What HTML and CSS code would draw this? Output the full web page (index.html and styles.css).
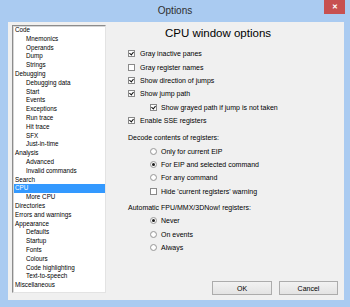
FILE: index.html
```html
<!DOCTYPE html>
<html lang="en">
<head>
    <meta charset="UTF-8">
    <title>Options</title>
    <link rel="stylesheet" href="styles.css">
</head>
<body>
<div class="window">
    <div class="titlebar">
        <span class="title">Options</span>
        <button type="button" class="close">&#x2715;</button>
    </div>

    <div class="client">
        <ul class="tree">
            <li>Code</li>
            <li class="child">Mnemonics</li>
            <li class="child">Operands</li>
            <li class="child">Dump</li>
            <li class="child">Strings</li>
            <li>Debugging</li>
            <li class="child">Debugging data</li>
            <li class="child">Start</li>
            <li class="child">Events</li>
            <li class="child">Exceptions</li>
            <li class="child">Run trace</li>
            <li class="child">Hit trace</li>
            <li class="child">SFX</li>
            <li class="child">Just-in-time</li>
            <li>Analysis</li>
            <li class="child">Advanced</li>
            <li class="child">Invalid commands</li>
            <li>Search</li>
            <li class="sel">CPU</li>
            <li class="child">More CPU</li>
            <li>Directories</li>
            <li>Errors and warnings</li>
            <li>Appearance</li>
            <li class="child">Defaults</li>
            <li class="child">Startup</li>
            <li class="child">Fonts</li>
            <li class="child">Colours</li>
            <li class="child">Code highlighting</li>
            <li class="child">Text-to-speech</li>
            <li>Miscellaneous</li>
        </ul>

        <div class="panel">
            <h1>CPU window options</h1>

            <div class="opts">
                <div class="row"><span class="cb on"></span><span>Gray inactive panes</span></div>
                <div class="row"><span class="cb"></span><span>Gray register names</span></div>
                <div class="row"><span class="cb on"></span><span>Show direction of jumps</span></div>
                <div class="row"><span class="cb on"></span><span>Show jump path</span></div>
                <div class="row sub"><span class="cb on"></span><span>Show grayed path if jump is not taken</span></div>
                <div class="row"><span class="cb on"></span><span>Enable SSE registers</span></div>

                <div class="group">Decode contents of registers:</div>
                <div class="row sub"><span class="rb"></span><span>Only for current EIP</span></div>
                <div class="row sub"><span class="rb on"></span><span>For EIP and selected command</span></div>
                <div class="row sub"><span class="rb"></span><span>For any command</span></div>
                <div class="row sub"><span class="cb"></span><span>Hide 'current registers' warning</span></div>

                <div class="group second">Automatic FPU/MMX/3DNow! registers:</div>
                <div class="row sub"><span class="rb on"></span><span>Never</span></div>
                <div class="row sub"><span class="rb"></span><span>On events</span></div>
                <div class="row sub"><span class="rb"></span><span>Always</span></div>
            </div>

            <div class="actions">
                <button type="button" class="btn ok">OK</button>
                <button type="button" class="btn">Cancel</button>
            </div>
        </div>
    </div>
</div>
</body>
</html>
```

FILE: styles.css
```css
body {
    margin: 0;
    background-color: #aacbf1;
    font-family: "Liberation Sans", Arial, sans-serif;
    color: #000;
}

.window {
    width: 350px;
    height: 307px;
    display: flex;
    flex-direction: column;
}

.titlebar {
    height: 22px;
    display: grid;
    grid-template-columns: 1fr auto 1fr;
    align-items: start;
}

.title {
    grid-column: 2;
    font-size: 10px;
    line-height: 22px;
    color: #2e2e2e;
}

.close {
    grid-column: 3;
    justify-self: end;
    width: 21px;
    height: 14px;
    margin-right: 5px;
    padding: 0;
    border: none;
    background-color: #c75050;
    color: #fff;
    font-size: 7px;
    font-weight: bold;
    line-height: 14px;
}

.client {
    flex: 1;
    margin: 0 6px 7px 8px;
    padding: 3px 6px 5px 4px;
    background-color: #f0f0f0;
    display: flex;
}

/* tree list on the left */
.tree {
    width: 94px;
    height: 268px;
    box-sizing: border-box;
    margin: 0;
    padding: 0;
    list-style: none;
    background-color: #fff;
    border: 1px solid;
    border-color: #8c8c8c #e3e3e3 #e3e3e3 #8c8c8c;
    box-shadow: inset 1px 1px 0 #d6d6d6;
    font-size: 6.3px;
    line-height: 8.8px;
    white-space: nowrap;
    color: #000;
}

.tree li {
    padding-left: 2px;
}

.tree li.child {
    padding-left: 13px;
}

.tree li.sel {
    margin-left: 1px;
    padding-left: 1px;
    background-color: #3399ff;
    color: #fff;
}

/* options panel */
.panel {
    flex: 1;
    display: flex;
    flex-direction: column;
    font-size: 7px;
    color: #000;
}

.panel h1 {
    margin: 1px 0 0 0;
    padding-right: 8px;
    font-size: 11.5px;
    font-weight: normal;
    line-height: 14px;
    text-align: center;
    color: #000;
}

.opts {
    margin-top: 7px;
    display: flex;
    flex-direction: column;
}

.row {
    height: 13.4px;
    display: flex;
    align-items: center;
    gap: 5px;
    padding-left: 22px;
    color: #000;
}

.row.sub {
    padding-left: 44px;
    gap: 4px;
}

.group {
    height: 13.4px;
    line-height: 13.4px;
    margin-top: 3.6px;
    padding-left: 22px;
}

.group.second {
    margin-top: 3px;
}

.cb {
    width: 7px;
    height: 7px;
    box-sizing: border-box;
    border: 1px solid #8a8a8a;
    background-color: #fff;
    flex: none;
    position: relative;
}

.cb.on::after {
    content: "";
    position: absolute;
    left: 1px;
    top: 0;
    width: 2px;
    height: 3px;
    border: solid #111;
    border-width: 0 1px 1px 0;
    transform: rotate(40deg);
}

.rb {
    width: 7px;
    height: 7px;
    box-sizing: border-box;
    border: 1px solid #9a9a9a;
    border-radius: 50%;
    background: radial-gradient(circle, #fff 40%, #e6e6e6 100%);
    flex: none;
    display: flex;
    align-items: center;
    justify-content: center;
}

.rb.on::after {
    content: "";
    width: 3px;
    height: 3px;
    border-radius: 50%;
    background-color: #1a1a1a;
}

.actions {
    margin-top: auto;
    display: flex;
    justify-content: flex-end;
    gap: 7px;
}

.btn {
    width: 59px;
    height: 14px;
    padding: 0;
    border: 1px solid #acacac;
    background: linear-gradient(#f2f2f2, #e3e3e3);
    font-family: "Liberation Sans", Arial, sans-serif;
    font-size: 7px;
    color: #000;
}

.btn.ok {
    width: 60px;
}
```
